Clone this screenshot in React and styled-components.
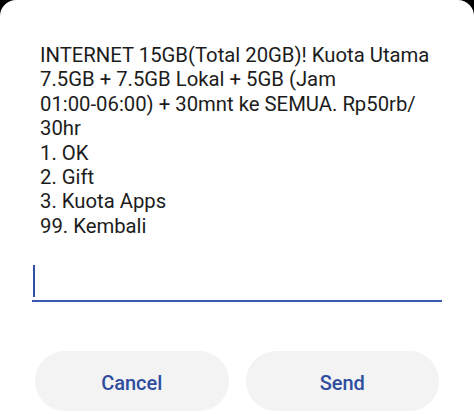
import React from "react";
import styled, { createGlobalStyle } from "styled-components";

const GlobalStyle = createGlobalStyle`
  html, body {
    margin: 0;
    padding: 0;
    background: #000;
  }
  body {
    font-family: Roboto, "Liberation Sans", Arial, sans-serif;
  }
`;

const Dialog = styled.div`
  width: 474px;
  height: 414px;
  background: #ffffff;
  border-radius: 16px 16px 0 0;
  box-sizing: border-box;
  display: flex;
  flex-direction: column;
  overflow: hidden;
`;

const Message = styled.div`
  padding: 43px 0 0 40px;
  font-size: 20.3px;
  line-height: 24.4px;
  color: #1c1c1c;
  white-space: nowrap;
`;

const InputField = styled.div`
  margin: 27px 32px 0 32px;
  height: 37px;
  border-bottom: 2px solid #3a5ab4;
  display: flex;
  align-items: flex-end;
  padding-bottom: 3px;
  box-sizing: border-box;
`;

const Caret = styled.span`
  display: block;
  width: 2px;
  height: 32px;
  margin-left: 1px;
  background: #2f4fa6;
`;

const ButtonRow = styled.div`
  display: flex;
  gap: 17px;
  padding: 49px 35px 0 35px;
`;

const DialogButton = styled.button`
  flex: 1;
  height: 60px;
  padding: 4px 0 0 0;
  border: none;
  border-radius: 30px;
  background: #f3f3f4;
  color: #2e4d9f;
  font-family: Roboto, "Liberation Sans", Arial, sans-serif;
  font-size: 20px;
  font-weight: 500;
  cursor: pointer;
`;

const lines = [
  "INTERNET 15GB(Total 20GB)! Kuota Utama",
  "7.5GB + 7.5GB Lokal + 5GB (Jam",
  "01:00-06:00) + 30mnt ke SEMUA. Rp50rb/",
  "30hr",
  "1. OK",
  "2. Gift",
  "3. Kuota Apps",
  "99. Kembali",
];

export default function App() {
  return (
    <>
      <GlobalStyle />
      <Dialog>
        <Message>
          {lines.map((line, i) => (
            <div key={i}>{line}</div>
          ))}
        </Message>
        <InputField>
          <Caret />
        </InputField>
        <ButtonRow>
          <DialogButton>Cancel</DialogButton>
          <DialogButton>Send</DialogButton>
        </ButtonRow>
      </Dialog>
    </>
  );
}
